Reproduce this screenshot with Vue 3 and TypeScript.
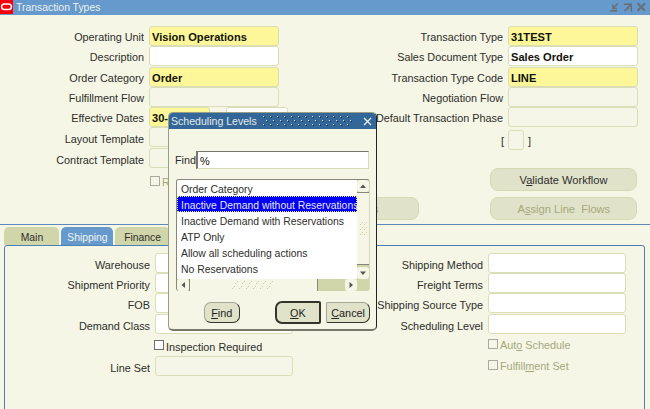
<script setup lang="ts">
interface Field {
  label: string
  value?: string
  kind?: 'required' | 'open' | 'disabled'
}

const leftFields: Field[] = [
  { label: 'Operating Unit', value: 'Vision Operations', kind: 'required' },
  { label: 'Description', kind: 'open' },
  { label: 'Order Category', value: 'Order', kind: 'required' },
  { label: 'Fulfillment Flow', kind: 'disabled' },
]
const templates: Field[] = [
  { label: 'Layout Template', kind: 'disabled' },
  { label: 'Contract Template', kind: 'disabled' },
]
const rightFields: Field[] = [
  { label: 'Transaction Type', value: '31TEST', kind: 'required' },
  { label: 'Sales Document Type', value: 'Sales Order', kind: 'open' },
  { label: 'Transaction Type Code', value: 'LINE', kind: 'required' },
  { label: 'Negotiation Flow', kind: 'disabled' },
  { label: 'Default Transaction Phase', kind: 'disabled' },
]
const tabs = ['Main', 'Shipping', 'Finance']
const activeTab = 'Shipping'
const shippingLeft = ['Warehouse', 'Shipment Priority', 'FOB', 'Demand Class']
const shippingRight = ['Shipping Method', 'Freight Terms', 'Shipping Source Type', 'Scheduling Level']
const levels = [
  'Order Category',
  'Inactive Demand without Reservations',
  'Inactive Demand with Reservations',
  'ATP Only',
  'Allow all scheduling actions',
  'No Reservations',
]
const selectedLevel = levels[1]
</script>

<template>
  <div class="window">
    <header class="titlebar">
      <svg class="logo" width="13" height="14" viewBox="0 0 13 14">
        <rect width="13" height="14" fill="#fb0007" />
        <rect x="1.6" y="4" width="9.8" height="5.6" rx="2.8" fill="none" stroke="#fff" stroke-width="1.5" />
      </svg>
      <span class="t title">Transaction Types</span>
      <svg class="controls" width="38" height="12" viewBox="0 0 38 12" fill="none" stroke="#6a6f74" stroke-width="1.5">
        <path d="M9 1.2L4 6.2M4 2.5V6.5H8M1 8.8H8.2" />
        <path d="M15 2.2H22.3V9.5M22.3 2.2L15.5 9M17.8 5.2L19.6 7" />
        <path d="M28.6 1.3L36 8.7M36 1.3L28.6 8.7" stroke-width="2" />
      </svg>
    </header>

    <section class="top">
      <div class="col left">
        <div v-for="f in leftFields" :key="f.label" class="row">
          <label class="t label">{{ f.label }}</label>
          <div class="field" :class="f.kind"><span class="t bold">{{ f.value }}</span></div>
        </div>
        <div class="row">
          <label class="t label">Effective Dates</label>
          <div class="field date required"><span class="t bold">30-</span></div>
          <div class="field date second open"></div>
        </div>
        <div v-for="f in templates" :key="f.label" class="row lower">
          <label class="t label">{{ f.label }}</label>
          <div class="field" :class="f.kind"></div>
        </div>
        <div class="check dim retro"><i class="box"></i><span class="t">R</span></div>
      </div>
      <div class="middle">
        <div class="pill dim cut"><span class="t">s</span></div>
      </div>
      <div class="col right">
        <div v-for="f in rightFields" :key="f.label" class="row">
          <label class="t label">{{ f.label }}</label>
          <div class="field" :class="f.kind"><span class="t bold">{{ f.value }}</span></div>
        </div>
        <div class="row flex-row">
          <span class="bracket open-b">[</span>
          <div class="field tiny disabled"></div>
          <span class="bracket">]</span>
        </div>
        <div class="pills">
          <div class="pill"><span class="t">V<u>a</u>lidate Workflow</span></div>
          <div class="pill dim"><span class="t">A<u>s</u>sign Line&nbsp; Flows</span></div>
        </div>
      </div>
    </section>

    <nav class="tabs">
      <div v-for="tab in tabs" :key="tab" class="tab" :class="{ active: tab === activeTab }">
        <span class="t">{{ tab }}</span>
      </div>
    </nav>

    <section class="panel">
      <div class="pcol pleft">
        <div v-for="name in shippingLeft" :key="name" class="row">
          <label class="t label">{{ name }}</label>
          <div class="field open"></div>
        </div>
        <div class="check inspection"><i class="box"></i><span class="t">Inspection Required</span></div>
        <div class="row">
          <label class="t label">Line Set</label>
          <div class="field disabled"></div>
        </div>
      </div>
      <div class="pcol pright">
        <div v-for="name in shippingRight" :key="name" class="row">
          <label class="t label">{{ name }}</label>
          <div class="field open"></div>
        </div>
        <div class="check dim"><i class="box"></i><span class="t">Aut<u>o</u> Schedule</span></div>
        <div class="check dim"><i class="box"></i><span class="t">Fulfill<u>m</u>ent Set</span></div>
      </div>
    </section>

    <div class="dialog">
      <header class="dlg-title">
        <span class="t">Scheduling Levels</span>
        <svg class="grip" width="91" height="11">
          <defs>
            <pattern id="grip" width="7" height="8" patternUnits="userSpaceOnUse">
              <rect x="0" y="0" width="1" height="1" fill="#dfe6dc" />
              <rect x="1" y="1" width="1" height="1" fill="#0c2c40" />
              <rect x="3" y="4" width="1" height="1" fill="#dfe6dc" />
              <rect x="4" y="5" width="1" height="1" fill="#0c2c40" />
            </pattern>
          </defs>
          <rect width="91" height="11" fill="url(#grip)" />
        </svg>
        <svg class="close" width="9" height="9" viewBox="0 0 9 9">
          <path d="M1 1L8 8M8 1L1 8" stroke="#e9eef0" stroke-width="1.4" />
        </svg>
      </header>
      <div class="find-row">
        <span class="t find-label">Find</span>
        <div class="find-input"><span class="t">%</span></div>
      </div>
      <div class="list">
        <div class="items">
          <div v-for="l in levels" :key="l" class="item" :class="{ selected: l === selectedLevel }">
            <span class="t">{{ l }}</span>
          </div>
        </div>
        <div class="vbar">
          <div class="arrow"><svg width="12" height="12"><path d="M3 8L6 4.5L9 8Z" fill="#555" /></svg></div>
          <div class="vthumb">
            <svg width="12" height="20"><path d="M3 6L6 3M7 6L10 3M3 11L6 8M7 11L10 8M3 16L6 13M7 16L10 13" stroke="#c9cf9f" stroke-dasharray="1.6 1" /></svg>
          </div>
          <div class="arrow"><svg width="12" height="12"><path d="M3 4.5L6 8L9 4.5Z" fill="#555" /></svg></div>
        </div>
        <div class="hbar">
          <div class="arrow"><svg width="12" height="12"><path d="M8 3L4.5 6L8 9Z" fill="#555" /></svg></div>
          <div class="hthumb">
            <svg width="46" height="10">
              <path d="M4 4L7 1M11 4L14 1M18 4L21 1M25 4L28 1M32 4L35 1M39 4L42 1M1 9L4 6M8 9L11 6M15 9L18 6M22 9L25 6M29 9L32 6M36 9L39 6" stroke="#c9cf9f" stroke-dasharray="1.6 1" />
            </svg>
          </div>
          <div class="htrack"></div>
          <div class="arrow"><svg width="12" height="12"><path d="M4.5 3L8 6L4.5 9Z" fill="#555" /></svg></div>
        </div>
      </div>
      <div class="buttons">
        <div class="btn find"><span class="t"><u>F</u>ind</span></div>
        <div class="btn ok"><span class="t"><u>O</u>K</span></div>
        <div class="btn cancel"><span class="t"><u>C</u>ancel</span></div>
      </div>
    </div>
  </div>
</template>

<style>
body {
  background: #f5f6e6;
}
</style>

<style scoped>
* {
  box-sizing: border-box;
}
.window {
  position: relative;
  width: 650px;
  height: 409px;
  overflow: hidden;
  background: #f5f6e6;
  font: 11px/14px 'Liberation Sans', Arial, sans-serif;
  color: #2e2e2a;
}
.t {
  display: inline-block;
  white-space: nowrap;
  transform: scaleX(0.985);
  transform-origin: left center;
}
.titlebar {
  display: flex;
  height: 15px;
  background: #6699cc;
}
.logo {
  flex: none;
}
.title {
  margin-left: 3px;
  color: #eaf0ee;
  transform: scaleX(0.945);
}
.controls {
  margin: 2px 3px 0 auto;
}
.top {
  display: flex;
  height: 210px;
  padding-top: 11px;
  border-bottom: 1px solid #5b8aba;
}
.col {
  display: flex;
  flex-direction: column;
}
.left {
  width: 290px;
}
.middle {
  width: 130px;
  padding-top: 171px;
}
.right {
  width: 217px;
}
.row {
  display: flex;
  height: 20.3px;
  flex: none;
}
.label {
  flex: none;
  width: 144px;
  padding-top: 4px;
  text-align: right;
  transform-origin: right center;
}
.lower .label {
  padding-top: 5px;
}
.field {
  flex: none;
  width: 130px;
  height: 20px;
  margin-left: 5px;
  padding: 3px 0 0 2px;
  border: 1px solid #d9deb6;
  border-radius: 3px;
  background: #fff;
}
.field.required {
  background: #fdf799;
}
.field.disabled {
  background: #f5f6e8;
}
.bold {
  font-weight: bold;
  color: #111108;
  transform: scaleX(1.01);
}
.date {
  width: 61px;
}
.date.second {
  width: 62px;
  margin-left: 16px;
}
.right .label {
  width: 83px;
  display: flex;
  justify-content: flex-end;
}
.flex-row {
  margin-top: 3px;
}
.tiny {
  width: 16px;
  margin-left: 4px;
}
.bracket {
  width: 9px;
  padding: 4px 0 0 4px;
}
.bracket.open-b {
  width: 84px;
  padding: 4px 0 0 81px;
}
.pills {
  display: flex;
  flex-direction: column;
  gap: 6px;
  padding: 17px 0 0 70px;
}
.pill {
  display: flex;
  justify-content: center;
  width: 147px;
  height: 23px;
  padding-top: 4px;
  border: 1px solid #d5dab2;
  border-radius: 8px;
  background: #e1e2ca;
}
.pill .t {
  transform: scaleX(1.01);
}
.pill .t,
.tab .t,
.btn .t {
  transform-origin: center;
}
.tab .t {
  transform: scaleX(0.94);
}
.dim {
  color: #a5a87c;
}
.cut {
  width: 129px;
  justify-content: flex-end;
  padding-right: 40px;
}
.check {
  display: flex;
  align-items: flex-start;
  gap: 2px;
  height: 21px;
  padding-top: 5px;
}
.check .t {
  line-height: 13px;
}
.box {
  width: 10px;
  height: 10px;
  border: 1px solid #6e6e68;
  background: #fff;
}
.dim .box {
  border-color: #aaaaa0;
  background: #f5f6e6;
}
.retro {
  padding: 8px 0 0 150px;
}
.tabs {
  display: flex;
  gap: 2px;
  height: 20px;
  padding: 2px 0 0 4px;
}
.tab {
  display: flex;
  justify-content: center;
  width: 55px;
  padding-top: 3px;
  border-radius: 5px 5px 0 0;
  background: #d1d6aa;
}
.tab.active {
  width: 52px;
  background: #6699cc;
  color: #f2f5ee;
}
.panel {
  display: flex;
  width: 641px;
  height: 170px;
  margin-left: 4px;
  padding-top: 7px;
  border: 1px solid #4a80b4;
  border-radius: 3px 3px 0 0;
}
.pleft {
  width: 290px;
}
.pleft .label {
  width: 145px;
}
.pleft .field,
.pright .field {
  width: 138px;
}
.pright {
  width: 340px;
}
.pright .label {
  display: flex;
  justify-content: flex-end;
  width: 188px;
}
.panel .row {
  height: 20.2px;
}
.panel .label {
  padding-top: 5px;
}
.inspection {
  padding: 6px 0 0 149px;
  height: 22.5px;
}
.inspection .t {
  padding-top: 1px;
}
.pright .check {
  padding-left: 193px;
}
.dialog {
  position: absolute;
  left: 168px;
  top: 112px;
  width: 209px;
  height: 219px;
  overflow: hidden;
  border: 1px solid #9a9d84;
  border-right: 1px solid #222;
  border-bottom: 2px solid #77786a;
  border-radius: 5px;
  background: #f5f6e6;
}
.dlg-title {
  display: flex;
  height: 16px;
  padding: 1px 4px 0 2px;
  background: #336699;
  color: #e4ebe6;
}
.dlg-title .t {
  width: 92px;
  transform: scaleX(0.96);
}
.grip {
  margin-top: 2px;
}
.close {
  margin: 3px 0 0 auto;
}
.find-row {
  display: flex;
  height: 18px;
  margin: 22px 7px 0 6px;
}
.find-label {
  width: 21px;
  padding-top: 2px;
}
.find-input {
  flex: 1;
  padding: 2px 0 0 2px;
  border: 1px solid #d5d9b8;
  border-top-color: #77776e;
  border-left: 2px solid #77776e;
  background: #fff;
  color: #111;
}
.list {
  display: grid;
  grid-template: 99px 12px / 180px 12px;
  width: 194px;
  margin: 10px 0 0 7px;
  border: 1px solid #85867c;
  border-right-color: #d5d9b8;
  border-bottom: 0;
  border-radius: 3px;
  background: #d1d6aa;
  overflow: hidden;
}
.items {
  background: #fff;
  overflow: hidden;
}
.item {
  height: 16px;
  padding: 2px 0 0 4px;
  color: #2e2e2a;
}
.item .t {
  transform: scaleX(0.945);
}
.item.selected {
  background: #0000f4;
  color: #e6e6fa;
  outline: 1px dotted #e8e86c;
  outline-offset: -1px;
}
.vbar {
  display: flex;
  flex-direction: column;
}
.arrow {
  width: 12px;
  height: 12px;
  flex: none;
  border-radius: 3px;
  background: #f5f6e6;
}
.arrow svg {
  display: block;
}
.vthumb {
  flex: 1;
  display: flex;
  align-items: center;
  border-top: 1px solid #85867c;
  border-bottom: 1px solid #85867c;
  background: #f5f6e6;
  margin-bottom: 2px;
}
.hbar {
  grid-column: 1 / 3;
  display: flex;
}
.hthumb {
  display: flex;
  align-items: center;
  justify-content: center;
  width: 129px;
  border-left: 1px solid #85867c;
  border-right: 1px solid #85867c;
  background: #f5f6e6;
}
.htrack {
  width: 27px;
}
.buttons {
  display: flex;
  align-items: center;
  height: 23px;
  margin-top: 10px;
  padding-left: 35px;
}
.btn {
  display: flex;
  justify-content: center;
  height: 21px;
  padding-top: 3px;
  border: 1px solid #a5a697;
  border-right-color: #34342c;
  border-bottom-color: #34342c;
  border-radius: 7px;
  background: #e1e2ca;
  color: #22221e;
}
.find {
  width: 36px;
}
.ok {
  width: 46px;
  height: 23px;
  margin: 0 5px 0 35px;
  padding-top: 3px;
  border: 2px solid #34342c;
  border-radius: 7px 2px 2px 7px;
}
.cancel {
  width: 44px;
  border-radius: 2px 7px 7px 2px;
}
</style>
